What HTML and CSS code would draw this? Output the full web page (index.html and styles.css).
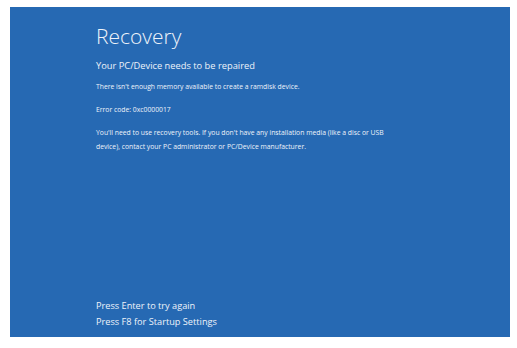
FILE: index.html
```html
<!DOCTYPE html>
<html lang="en">
<head>
  <meta charset="UTF-8" />
  <meta name="viewport" content="width=device-width, initial-scale=1" />
  <title>Recovery</title>
  <link rel="stylesheet" href="styles.css">
</head>
<body>
  <div class="screen">
    <div class="content">
      <h1 class="title">Recovery</h1>
      <h2 class="subtitle">Your PC/Device needs to be repaired</h2>
      <p class="info">There isn't enough memory available to create a ramdisk device.</p>
      <p class="info">Error code: 0xc0000017</p>
      <p class="info wide">You'll need to use recovery tools. If you don't have any installation media (like a disc or USB device), contact your PC administrator or PC/Device manufacturer.</p>
    </div>
    <div class="footer">
      <div class="option">Press Enter to try again</div>
      <div class="option">Press F8 for Startup Settings</div>
    </div>
  </div>
</body>
</html>
```

FILE: styles.css
```css
body {
  margin: 0;
  background: #fff;
  font-family: 'Open Sans', 'Liberation Sans', sans-serif;
}

.screen {
  margin: 7px 0 0 10px;
  width: 500px;
  height: 330px;
  background: #2669b3;
  color: #eef3fa;
  box-sizing: border-box;
  padding: 0 0 7px 86px;
  display: flex;
  flex-direction: column;
}

.content {
  padding-top: 15px;
}

.title {
  margin: 0;
  font-size: 21px;
  font-weight: 300;
  line-height: 28px;
}

.subtitle {
  margin: 9px 0 0;
  font-size: 9.3px;
  font-weight: 400;
  line-height: 14px;
}

.info {
  margin: 9px 0 0;
  font-size: 6.8px;
  line-height: 14px;
}

.subtitle + .info {
  margin-top: 7px;
}

.wide {
  max-width: 310px;
}

.footer {
  margin-top: auto;
}

.option {
  font-size: 9.2px;
  line-height: 16px;
}
```
